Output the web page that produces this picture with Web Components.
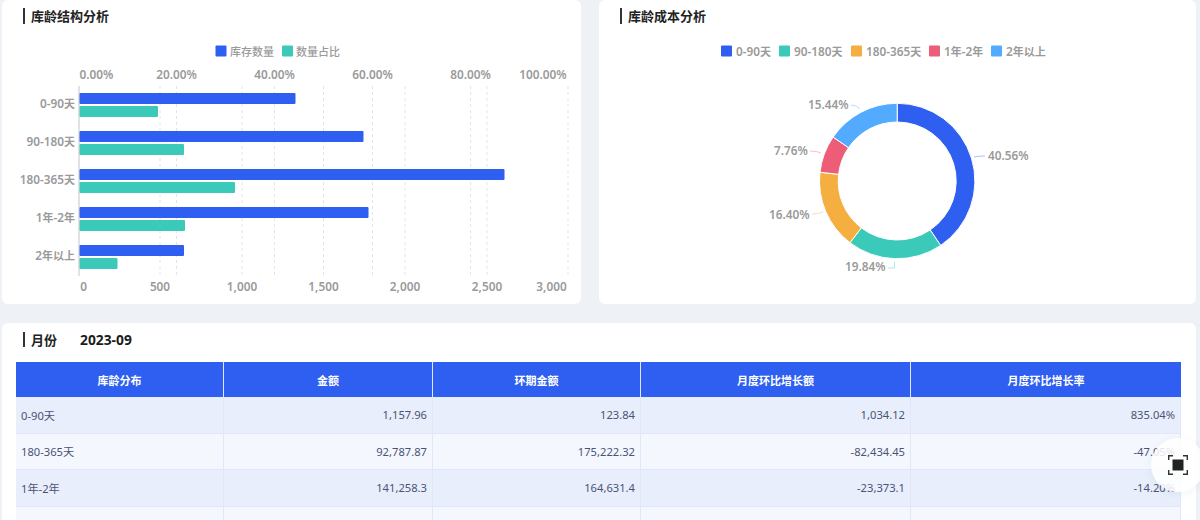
<!DOCTYPE html>
<html lang="zh"><head><meta charset="utf-8"><title>库龄分析</title>
<style>
html,body{margin:0;height:520px;overflow:hidden;background:#eef1f6}
body{font-family:"Noto Sans","Noto Sans CJK SC",sans-serif}
</style></head><body>
<age-page>
  <age-card slot="left" heading="库龄结构分析"><age-bars></age-bars></age-card>
  <age-card slot="right" heading="库龄成本分析"><age-donut></age-donut></age-card>
  <age-card slot="bottom" heading="月份" value="2023-09"><age-table></age-table></age-card>
</age-page>
<age-fab></age-fab>
<script>
const FONT='"Noto Sans","Noto Sans CJK SC",sans-serif';
const C={blue:'#2e5ff0',teal:'#3bc9b9',orange:'#f5ae40',red:'#ee5d77',sky:'#52abff',grey:'#9a9a9a'};
const mix=s=>s.replace(/[\u4e00-\u9fff]+/g,m=>`<tspan font-size="11">${m}</tspan>`);
const txt=(x,y,s,a='start',c=C.grey,w=600,z=11.8)=>`<text x="${x}" y="${y}" text-anchor="${a}" dominant-baseline="central" fill="${c}" font-size="${z}" font-weight="${w}" font-family='${FONT}'>${mix(s)}</text>`;
const leg=(x,c,y=51)=>`<rect x="${x}" y="${y-5.5}" width="11" height="11" rx="1" fill="${c}"/>`;

class AgePage extends HTMLElement{constructor(){super();this.attachShadow({mode:'open'}).innerHTML=`<style>
:host{display:flex;flex-direction:column;gap:19px;padding:0 4px 0 2px;width:1194px}
.top{display:grid;grid-template-columns:579px 597px;gap:18px;height:304px}
</style><div class="top"><slot name="left"></slot><slot name="right"></slot></div><slot name="bottom"></slot>`}}

class AgeCard extends HTMLElement{connectedCallback(){const v=this.getAttribute('value');this.attachShadow({mode:'open'}).innerHTML=`<style>
:host{display:block;background:#fff;border-radius:6px;overflow:hidden}
header{display:flex;align-items:center;height:32px;margin-bottom:2px;padding-left:21px;color:#222;font-size:13px;font-weight:600}
span{padding-bottom:2px}
:host([value]) header{height:33px}
:host([value]) span{padding-bottom:0}
i{width:2px;height:16px;background:#333;margin-right:6px}
:host([value]) i{height:15px}
b{margin-left:23px;font-size:13.8px;font-weight:700;color:#1c1c1c}
</style><header><i></i><span>${this.getAttribute('heading')}</span>${v?`<b>${v}</b>`:''}</header><slot></slot>`}}

class AgeBars extends HTMLElement{connectedCallback(){
 const grid=[160,176.5,242,274.5,323.5,372.5,405,470.6,487,568];
 const rows=[['0-90天',93,295.5,158],['90-180天',131,363.5,184],['180-365天',169,504.5,235],['1年-2年',207,368.5,185],['2年以上',245,184,117.5]];
 const top=[['0.00%',96.5],['20.00%',176.5],['40.00%',274.5],['60.00%',372.5],['80.00%',470.6],['100.00%',543]];
 const bot=[['0',83.5],['500',160],['1,000',242],['1,500',323.5],['2,000',405],['2,500',487],['3,000',551.5]];
 let s=grid.map(x=>`<line x1="${x}" x2="${x}" y1="86" y2="276" stroke="#e4e4e4" stroke-dasharray="3 3"/>`).join('');
 s+=`<line x1="79" x2="79" y1="86" y2="276" stroke="#d8d8d8" stroke-width="1.5"/>`;
 rows.forEach(([n,y,b,t])=>{
  s+=`<rect x="79.5" y="${y}" width="${b-79.5}" height="11" rx="1" fill="${C.blue}"/><rect x="79.5" y="${y+13}" width="${t-79.5}" height="11" rx="1" fill="${C.teal}"/>`;
  s+=txt(75,y+10.3,n,'end');
 });
 top.forEach(([t,x])=>s+=txt(x,73.5,t,'middle'));
 bot.forEach(([t,x])=>s+=txt(x,285.5,t,'middle'));
 s+=leg(215.5,C.blue)+txt(230,51,'库存数量','start',C.grey,500,11)+leg(282,C.teal)+txt(296,51,'数量占比','start',C.grey,500,11);
 this.attachShadow({mode:'open'}).innerHTML=`<style>:host{display:block}svg{display:block}</style><svg width="579" height="270" viewBox="2 34 579 270">${s}</svg>`}}

class AgeDonut extends HTMLElement{connectedCallback(){
 const cx=897.2,cy=181,R=77.7,r=59,vals=[[40.56,C.blue],[19.84,C.teal],[16.40,C.orange],[7.76,C.red],[15.44,C.sky]];
 const pt=(rad,a)=>[(cx+rad*Math.sin(a)).toFixed(2),(cy-rad*Math.cos(a)).toFixed(2)];
 let s='',acc=0;
 vals.forEach(([v,c])=>{const a0=acc/100*2*Math.PI;acc+=v;const a1=acc/100*2*Math.PI,l=v>50?1:0;
  const A=pt(R,a0),B=pt(R,a1),D=pt(r,a1),E=pt(r,a0);
  s+=`<path d="M${A}A${R} ${R} 0 ${l} 1 ${B}L${D}A${r} ${r} 0 ${l} 0 ${E}Z" fill="${c}" stroke="#fff" stroke-width="1"/>`;});
 const lead=[['M974 157Q978 156 985 156',C.blue],['M894.5 262V268H888',C.teal],['M823 212Q819 214 812 214',C.orange],['M821 153Q817 151 810 151',C.red],['M860 109Q857 105 851 105',C.sky]];
 lead.forEach(([d,c])=>s+=`<path d="${d}" fill="none" stroke="${c}" stroke-opacity=".4" stroke-width="1"/>`);
 [['40.56%',988,155],['19.84%',845,265.5],['16.40%',769,213.5],['7.76%',774,150],['15.44%',808,104]].forEach(([t,x,y])=>s+=txt(x,y,t));
 [[721,C.blue,'0-90天',736],[779,C.teal,'90-180天',794],[851,C.orange,'180-365天',866],[929,C.red,'1年-2年',944],[991,C.sky,'2年以上',1006]].forEach(([x,c,t,tx])=>s+=leg(x,c)+txt(tx,51,t));
 this.attachShadow({mode:'open'}).innerHTML=`<style>:host{display:block}svg{display:block}</style><svg width="597" height="270" viewBox="599 34 597 270">${s}</svg>`}}

class AgeTable extends HTMLElement{connectedCallback(){
 const head=['库龄分布','金额','环期金额','月度环比增长额','月度环比增长率'];
 const rows=[['0-90天','1,157.96','123.84','1,034.12','835.04%'],['180-365天','92,787.87','175,222.32','-82,434.45','-47.05%'],['1年-2年','141,258.3','164,631.4','-23,373.1','-14.20%'],['','','','','']];
 this.attachShadow({mode:'open'}).innerHTML=`<style>
:host{display:block;padding:4px 15px 0 14px}
.g{display:grid;grid-template-columns:208px 209px 208px 270px 270px;grid-template-rows:35px repeat(4,36.5px);width:1165px;font-size:11.2px;color:#4b5373}
.h{background:${C.blue};color:#fff;font-size:11px;font-weight:700;display:flex;align-items:center;justify-content:center;border-right:1.5px solid #dfe8ff;box-sizing:border-box}
.h:nth-child(5){border-right:0}
.c{display:flex;align-items:center;justify-content:flex-end;padding:0 5px;box-sizing:border-box;border-right:1px solid #e0e7f8;border-bottom:1px solid #e0e7f8}
.c.f{justify-content:flex-start}
.c.o{background:#e8eefb}.c.e{background:#f4f7fe}
</style><div class="g">${head.map(h=>`<div class="h">${h}</div>`).join('')}${rows.map((r,i)=>r.map((c,j)=>`<div class="c ${j?'':'f'} ${i%2?'e':'o'}">${c}</div>`).join('')).join('')}</div>`;
 }}

class AgeFab extends HTMLElement{connectedCallback(){this.attachShadow({mode:'open'}).innerHTML=`<style>
:host{position:fixed;left:1151px;top:438px;width:54px;height:54px;border-radius:50%;background:rgba(255,255,255,.85);box-shadow:0 2px 10px rgba(40,60,110,.06);display:flex;align-items:center;justify-content:center}
svg{display:block}
</style><svg width="20" height="20" viewBox="0 0 20 20" fill="none" stroke="#333" stroke-width="1.4"><path d="M.7 5V.7H5M15 .7h4.3V5M19.3 15v4.3H15M5 19.3H.7V15"/><rect x="4.5" y="4.5" width="11" height="11" fill="#222" stroke="none"/></svg>`}}

customElements.define('age-page',AgePage);
customElements.define('age-card',AgeCard);
customElements.define('age-bars',AgeBars);
customElements.define('age-donut',AgeDonut);
customElements.define('age-table',AgeTable);
customElements.define('age-fab',AgeFab);
</script></body></html>
